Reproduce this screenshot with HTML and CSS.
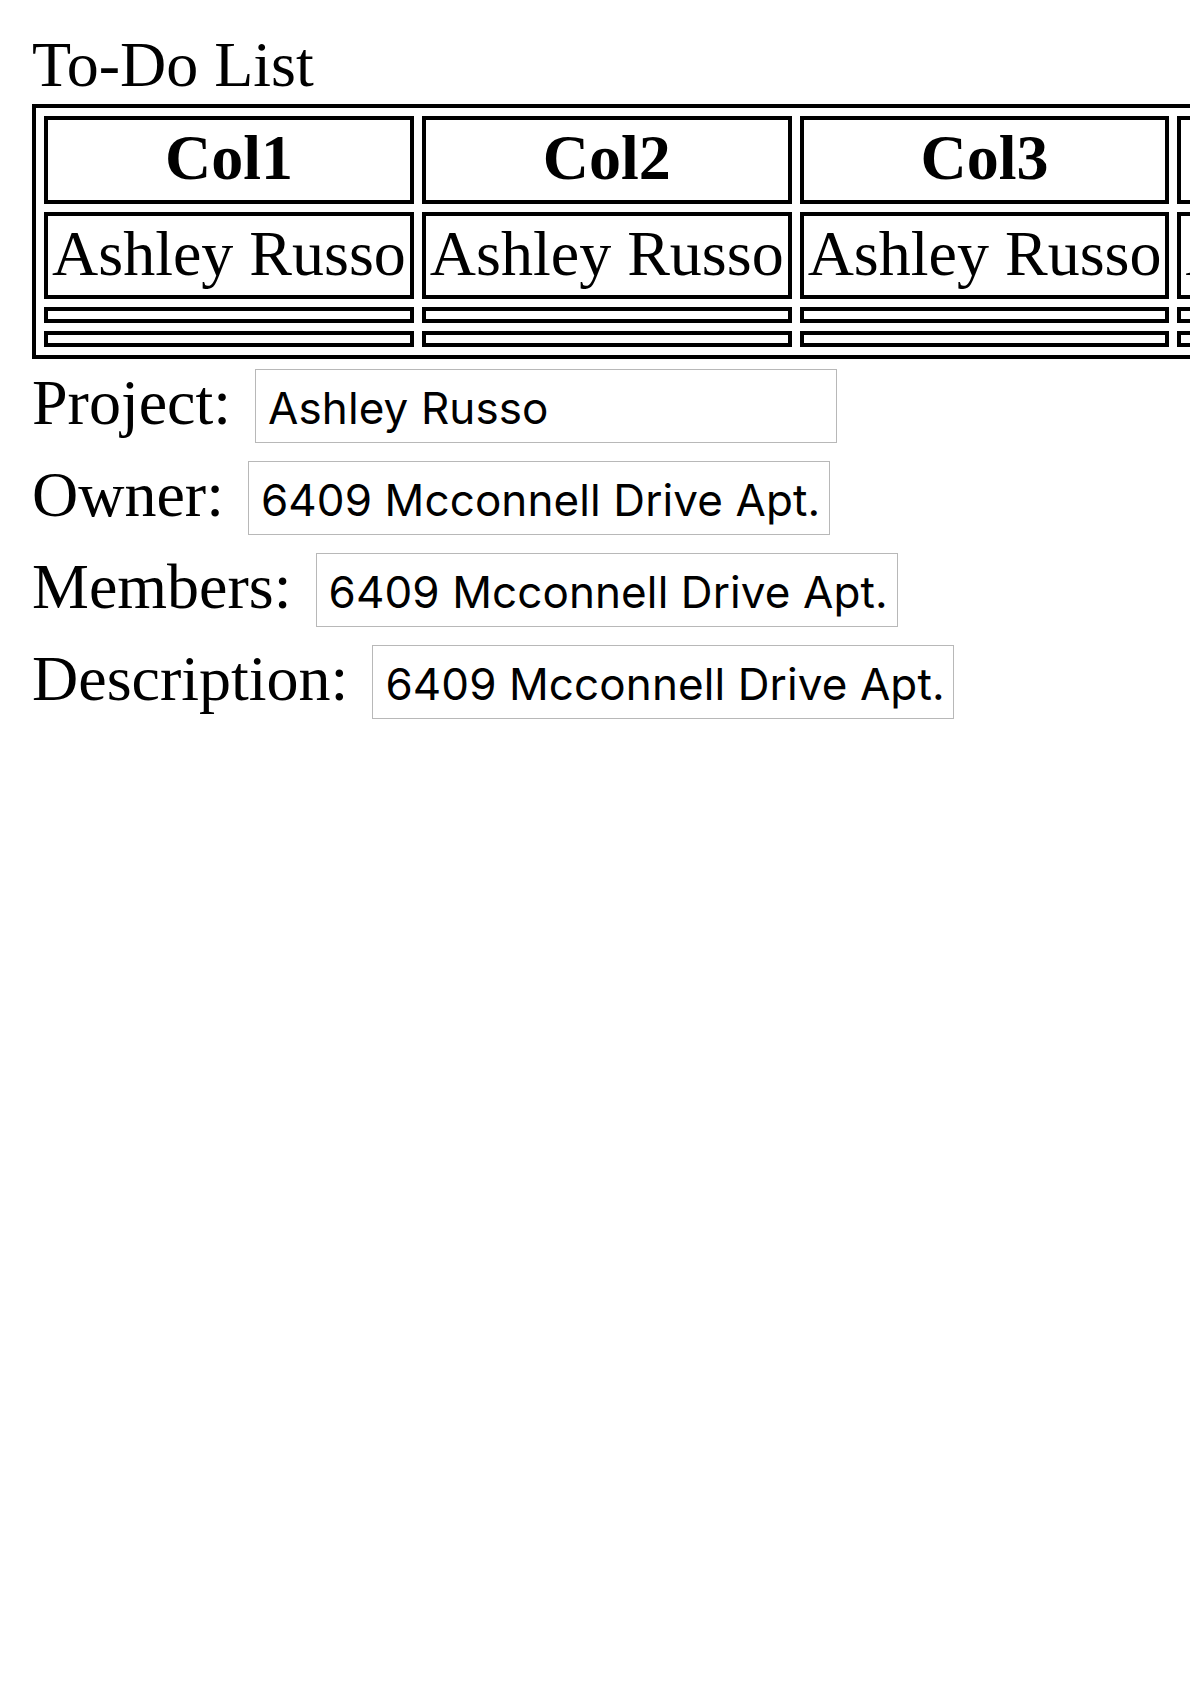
FILE: index.html
```html
<!DOCTYPE html>
<html lang="en">
<head>
<meta charset="utf-8">
<title>To-Do List</title>
<link rel="stylesheet" href="styles.css">
</head>
<body>
<div class="title">To-Do List</div>
<div class="table-wrap">
<table class="todo">
  <thead>
    <tr><th>Col1</th><th>Col2</th><th>Col3</th><th>Col4</th></tr>
  </thead>
  <tbody>
    <tr><td>Ashley Russo</td><td>Ashley Russo</td><td>Ashley Russo</td><td>Ashley Russo</td></tr>
    <tr class="empty"><td></td><td></td><td></td><td></td></tr>
    <tr class="empty"><td></td><td></td><td></td><td></td></tr>
  </tbody>
</table>
</div>
<div class="field"><label class="field-label" for="project">Project:</label><input class="field-input" id="project" type="text" value="Ashley Russo"></div>
<div class="field"><label class="field-label" for="owner">Owner:</label><input class="field-input" id="owner" type="text" value="6409 Mcconnell Drive Apt."></div>
<div class="field"><label class="field-label" for="members">Members:</label><input class="field-input" id="members" type="text" value="6409 Mcconnell Drive Apt."></div>
<div class="field"><label class="field-label" for="description">Description:</label><input class="field-input" id="description" type="text" value="6409 Mcconnell Drive Apt."></div>
</body>
</html>
```
FILE: styles.css
```css
html {
  background: #fff;
}

body {
  margin: 32px 0 32px 32px;
  font-family: "Liberation Serif", "Times New Roman", serif;
  font-size: 64px;
  color: #000;
  overflow-x: hidden;
}

.title {
  line-height: 66px;
  padding-bottom: 6px;
}

.table-wrap {
  overflow: hidden;
}

.todo {
  border: 4px solid #000;
  border-spacing: 8px;
  white-space: nowrap;
}

.todo th,
.todo td {
  border: 4px solid #000;
  padding: 4px 4px 8px;
  line-height: 67.5px;
}

.todo th {
  font-weight: bold;
  text-align: center;
}

.todo td {
  text-align: left;
}

.todo .empty td {
  padding: 4px;
}

.field {
  display: flex;
  align-items: baseline;
}

.field-label {
  line-height: 72px;
  margin-right: 24px;
}

.field-input {
  box-sizing: border-box;
  width: 582px;
  height: 74px;
  margin: 10px 0 8px;
  padding: 3px 6px 0 12px;
  border: 1px solid #b8b8b8;
  border-radius: 0;
  font-family: Inter, "Noto Sans", sans-serif;
  font-size: 44px;
  letter-spacing: 0.1px;
  color: #000;
  background: #fff;
  outline: none;
}
```
